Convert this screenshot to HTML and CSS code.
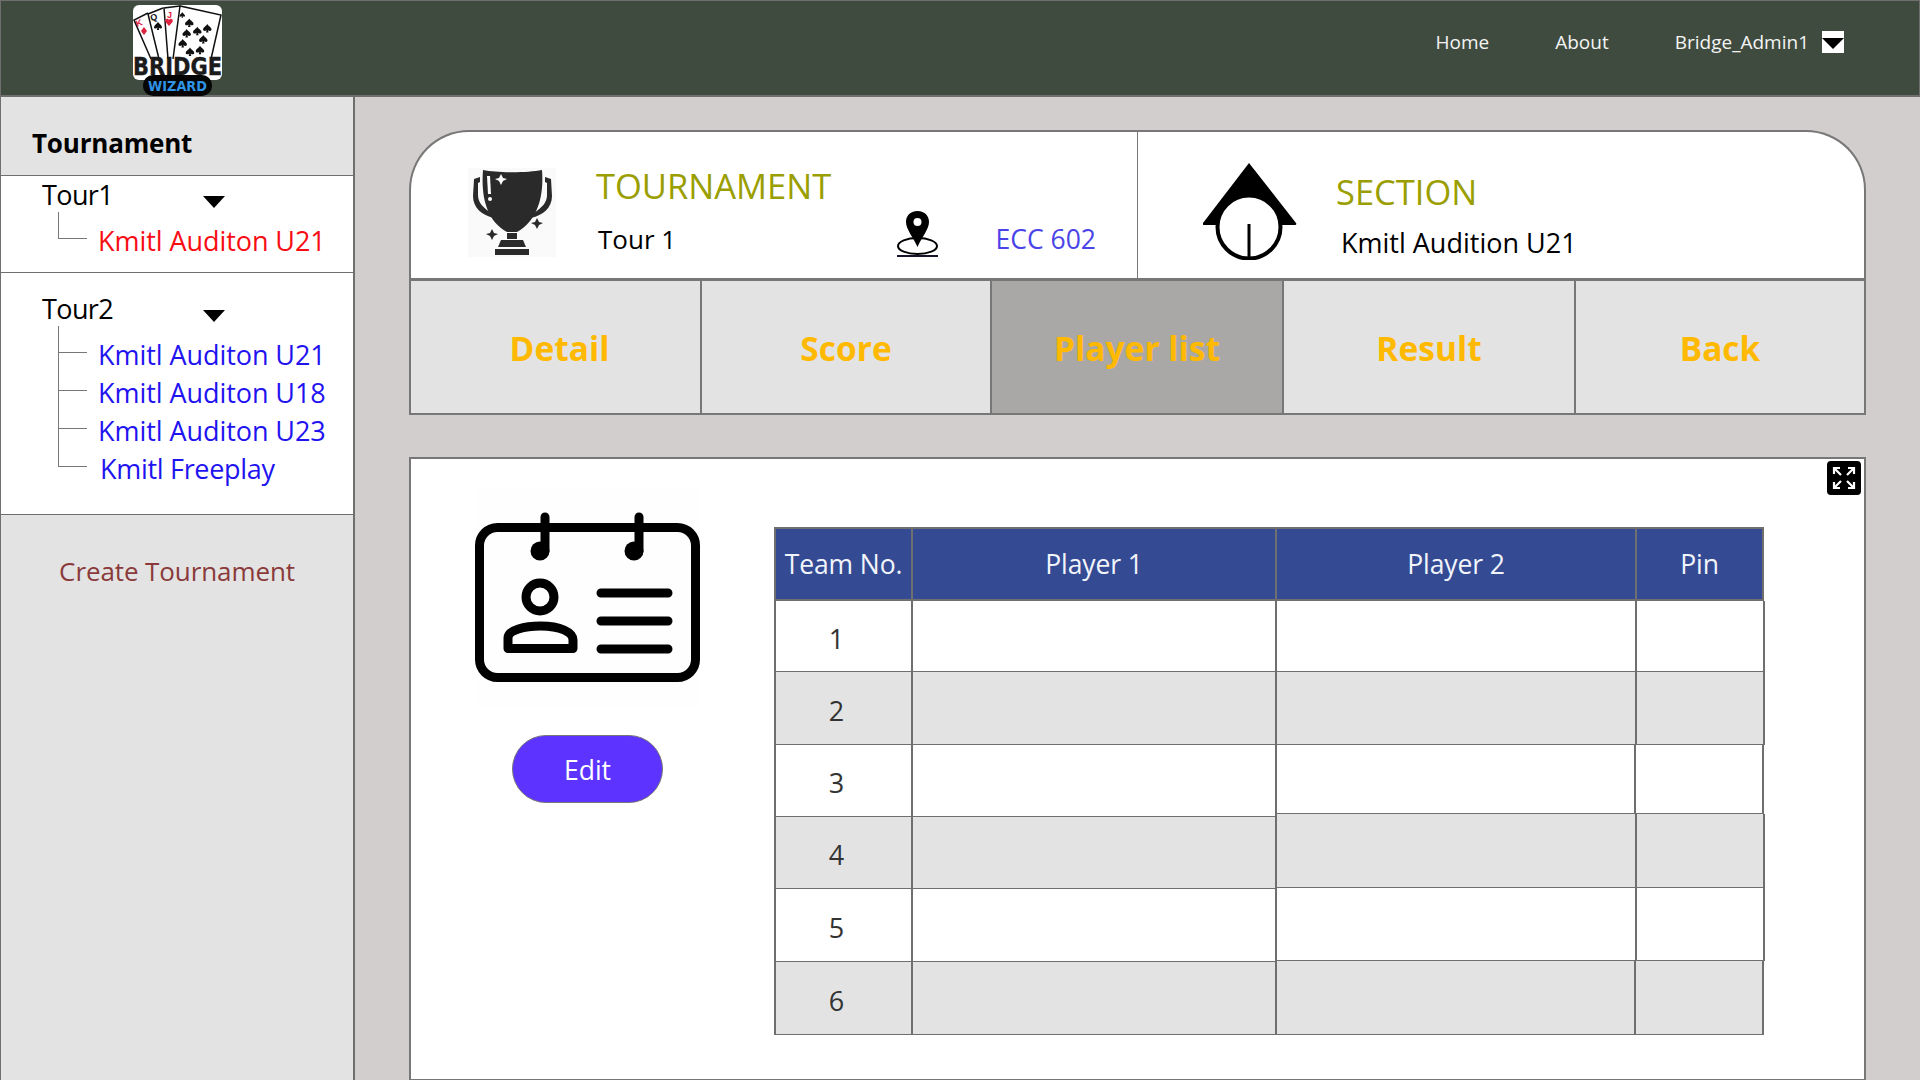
FILE: index.html
```html
<!DOCTYPE html>
<html lang="en">
<head>
<meta charset="utf-8">
<title>Bridge Wizard</title>
<link rel="stylesheet" href="styles.css">
</head>
<body>
<header class="topbar">
  <svg class="logo" viewBox="0 0 89 91" width="89" height="91">
    <defs>
      <path id="spade" d="M0 -5 C2 -2 5 -1 5 1.500 C5 3.500 2 3.500 .8 2 L1.500 5 H-1.500 L-.8 2 C-2 3.500 -5 3.500 -5 1.500 C-5 -1 -2 -2 0 -5Z"/>
    </defs>
    <rect x="0" y="0" width="89" height="75" rx="6" fill="#fff"/>
    <g fill="none" stroke="#111" stroke-width="1.500">
      <path d="M18 54 L1 15 L15 8"/>
      <path d="M26 54 L15 9 L30 3"/>
      <path d="M35 54 L31 3 L47 1"/>
      <path d="M40 54 L47 1 L88 10 L78 54"/>
    </g>
    <g class="logo-rank">
      <text x="4" y="22" fill="#e0213f" transform="rotate(-20 4 22)">K</text>
      <text x="18" y="16" fill="#111" transform="rotate(-12 18 16)">Q</text>
      <text x="34" y="13" fill="#e0213f">J</text>
    </g>
    <path fill="#e0213f" d="M11 22 L14 26 L11 30 L8 26 Z"/>
    <use href="#spade" transform="translate(25 21) scale(.8)" fill="#111"/>
    <path fill="#e0213f" d="M36 21 L32.500 17 C31 14 35 12.500 36 15 C37 12.500 41 14 39.500 17 Z"/>
    <g fill="#111">
      <use href="#spade" transform="translate(49.300 10) scale(.55)"/>
      <use href="#spade" transform="translate(56.300 17.700) scale(.85)"/>
      <use href="#spade" transform="translate(74.300 23.300) scale(.85)"/>
      <use href="#spade" transform="translate(64.300 26) scale(.85)"/>
      <use href="#spade" transform="translate(53.700 28.300) scale(.85)"/>
      <use href="#spade" transform="translate(70.300 34.300) scale(.85)"/>
      <use href="#spade" transform="translate(49.700 38.300) scale(.85)"/>
      <use href="#spade" transform="translate(57 46.700) scale(.85)"/>
      <use href="#spade" transform="translate(67 45) scale(.85)"/>
    </g>
    <text class="logo-bridge" x="0" y="70" textLength="89" lengthAdjust="spacingAndGlyphs">BRIDGE</text>
    <rect x="10" y="70" width="69" height="21" rx="10" fill="#050505"/>
    <text class="logo-wizard" x="15" y="86" textLength="59" lengthAdjust="spacingAndGlyphs">WIZARD</text>
  </svg>
  <nav class="nav">
    <a class="nav-link">Home</a>
    <a class="nav-link">About</a>
    <a class="nav-link nav-user">Bridge_Admin1</a>
    <span class="nav-drop"><i class="caret caret-sm"></i></span>
  </nav>
</header>

<div class="main">
  <aside class="sidebar">
    <h2 class="side-head">Tournament</h2>
    <section class="group group-one">
      <div class="group-title"><span class="group-name">Tour1</span><i class="caret"></i></div>
      <div class="tree">
        <div class="leaf leaf-active"><span>Kmitl Auditon U21</span></div>
      </div>
    </section>
    <section class="group group-two">
      <div class="group-title"><span class="group-name">Tour2</span><i class="caret"></i></div>
      <div class="tree">
        <div class="leaf"><span>Kmitl Auditon U21</span></div>
        <div class="leaf"><span>Kmitl Auditon U18</span></div>
        <div class="leaf"><span>Kmitl Auditon U23</span></div>
        <div class="leaf leaf-shift"><span>Kmitl Freeplay</span></div>
      </div>
    </section>
    <div class="side-create">Create Tournament</div>
  </aside>

  <main class="content">
    <div class="summary">
      <div class="sum-left">
        <svg class="ico-trophy" viewBox="0 0 88 89" width="88" height="89">
          <rect width="88" height="89" fill="#fafafa"/>
          <g fill="#2a2a2a">
            <path d="M15 2 C30 5 59 5 74 2 C76 28 70 52 49 64 L39 64 C18 52 13 28 15 2 Z"/>
            <path d="M39 65 H49 V71 H39 Z"/>
            <path d="M33 72 H55 L58 79 H30 Z"/>
            <path d="M27 81 H61 V87 H27 Z"/>
            <path d="M6 11 L12 9 V14 L10 15 V27 C10 35 15 39 24 46 L26 50 C14 47 5 40 5 28 Z"/>
            <path d="M83 11 L77 9 V14 L79 15 V27 C79 35 74 39 65 46 L63 50 C75 47 84 40 84 28 Z"/>
            <path d="M24 61 L26 65 L30 66 L26 68 L24 72 L22 68 L18 66 L22 65 Z"/>
            <path d="M69 50 L71 54 L75 55 L71 57 L69 61 L67 57 L63 55 L67 54 Z"/>
          </g>
          <path fill="#fff" d="M33 6 L35 10 L39 11 L35 13 L33 17 L31 13 L27 11 L31 10 Z"/>
          <path fill="#fff" d="M19 8 L22 8 L23 26 L20 26 Z"/>
          <circle cx="22" cy="31" r="2" fill="#fff"/>
        </svg>
        <div class="sum-text">
          <div class="sum-title">TOURNAMENT</div>
          <div class="sum-row">
            <span class="sum-name">Tour 1</span>
            <svg class="ico-pin" viewBox="0 0 42 46" width="42" height="46">
              <ellipse cx="20.500" cy="35" rx="19.500" ry="8" fill="none" stroke="#000" stroke-width="2"/>
              <path fill="#000" d="M20.500 0 C28 0 32 5 32 11 C32 18 25 26 20.500 36 C16 26 9 18 9 11 C9 5 13 0 20.500 0 Z"/>
              <circle cx="20.500" cy="11" r="4" fill="#fff"/>
              <rect x="0" y="44" width="41" height="2" fill="#15152a"/>
            </svg>
            <span class="sum-room">ECC 602</span>
          </div>
        </div>
      </div>
      <div class="sum-right">
        <svg class="ico-section" viewBox="0 0 94 97" width="94" height="97">
          <path fill="#000" d="M46 0 L93 60 Q94 62 92 62 H1 Q-1 62 0 60 Z"/>
          <circle cx="46" cy="64" r="31.500" fill="#fff" stroke="#000" stroke-width="4"/>
          <path d="M46 61 V95" stroke="#000" stroke-width="3" fill="none"/>
        </svg>
        <div class="sec-text">
          <div class="sum-title">SECTION</div>
          <div class="sec-name">Kmitl Audition U21</div>
        </div>
      </div>
    </div>

    <div class="tabs">
      <div class="tab tab-a">Detail</div>
      <div class="tab tab-b">Score</div>
      <div class="tab tab-c tab-on">Player list</div>
      <div class="tab tab-d">Result</div>
      <div class="tab tab-e">Back</div>
    </div>

    <div class="panel">
      <svg class="ico-expand" viewBox="0 0 34 34" width="34" height="34">
        <rect width="34" height="34" rx="4" fill="#000"/>
        <g fill="none" stroke="#fff" stroke-width="2.200">
          <path d="M7 13 V7 H13 M7 7 L14 14"/>
          <path d="M27 13 V7 H21 M27 7 L20 14"/>
          <path d="M7 21 V27 H13 M7 27 L14 20"/>
          <path d="M27 21 V27 H21 M27 27 L20 20"/>
        </g>
      </svg>
      <div class="side-col">
        <svg class="ico-id" viewBox="0 0 225 220" width="225" height="220">
          <rect x="3" width="220" height="220" fill="#fefefe"/>
          <g fill="none" stroke="#000" stroke-width="9" stroke-linecap="round" stroke-linejoin="round">
            <rect x="4.500" y="39.500" width="216" height="150" rx="18"/>
            <path d="M70 29 V63"/>
            <path d="M164 29 V63"/>
            <circle cx="65" cy="109" r="14"/>
            <path d="M33 160.500 V150 C33 142 50 138 65.500 138 C85 138 98 144 98 152 V160.500 Z"/>
            <path d="M126 105 H193 M126 133 H193 M126 161 H193"/>
          </g>
          <circle cx="65" cy="63" r="9.500" fill="#000"/>
          <circle cx="159" cy="63" r="9.500" fill="#000"/>
        </svg>
        <button class="edit">Edit</button>
      </div>
      <div class="tbl">
        <div class="thead">
          <div class="th th-team">Team No.</div>
          <div class="th th-p1">Player 1</div>
          <div class="th th-p2">Player 2</div>
          <div class="th th-pin">Pin</div>
        </div>
        <div class="tbody">
          <div class="stack">
            <div class="lrow"><div class="td td-team">1</div><div class="td td-p1"></div></div>
            <div class="lrow"><div class="td td-team">2</div><div class="td td-p1"></div></div>
            <div class="lrow"><div class="td td-team">3</div><div class="td td-p1"></div></div>
            <div class="lrow"><div class="td td-team">4</div><div class="td td-p1"></div></div>
            <div class="lrow"><div class="td td-team">5</div><div class="td td-p1"></div></div>
            <div class="lrow"><div class="td td-team">6</div><div class="td td-p1"></div></div>
          </div>
          <div class="stack">
            <div class="rrow"><div class="td td-p2"></div><div class="td td-pin"></div></div>
            <div class="rrow"><div class="td td-p2"></div><div class="td td-pin"></div></div>
            <div class="rrow"><div class="td td-p2"></div><div class="td td-pin"></div></div>
            <div class="rrow"><div class="td td-p2"></div><div class="td td-pin"></div></div>
            <div class="rrow"><div class="td td-p2"></div><div class="td td-pin"></div></div>
            <div class="rrow"><div class="td td-p2"></div><div class="td td-pin"></div></div>
          </div>
        </div>
      </div>
    </div>
  </main>
</div>
</body>
</html>
```
FILE: styles.css
```css
* { box-sizing: border-box; }
html, body { margin: 0; height: 100%; }
body {
  width: 1920px;
  height: 1080px;
  overflow: hidden;
  background: #d3cece;
  font-family: "Open Sans", "Noto Sans", sans-serif;
  display: flex;
  flex-direction: column;
}

/* top bar */
.topbar {
  height: 97px;
  flex: none;
  background: #3f4b3f;
  border: 1px solid #6f6f6f;
  border-bottom-width: 2px;
  display: flex;
  align-items: flex-start;
  padding: 4px 75px 0 132px;
}
.logo { display: block; flex: none; overflow: visible; }
.logo-rank text { font: bold 9px "Liberation Sans", sans-serif; }
.logo-bridge { font: bold 24px "DejaVu Sans", sans-serif; fill: #1b1b1b; stroke: #1b1b1b; stroke-width: .4px; }
.logo-wizard { font: bold 14px "DejaVu Sans", sans-serif; fill: #2f93e6; }
.nav {
  margin-left: auto;
  height: 74px;
  display: flex;
  align-items: center;
  color: #f4f4f4;
  font-size: 19px;
}
.nav-link { margin-right: 66px; }
.nav-user { margin-right: 13px; }
.nav-drop {
  width: 22px;
  height: 22px;
  background: #fff;
  display: flex;
  align-items: center;
  justify-content: center;
}
.caret {
  display: block;
  width: 0;
  height: 0;
  border-left: 11px solid transparent;
  border-right: 11px solid transparent;
  border-top: 11px solid #000;
}
.caret-sm { margin-top: 2px; }

/* layout */
.main { flex: 1; display: flex; min-height: 0; }
.sidebar {
  width: 355px;
  flex: none;
  background: #e3e3e3;
  border-left: 1px solid #6f6f6f;
  border-right: 2px solid #6f6f6f;
}
.side-head {
  margin: 0;
  height: 79px;
  padding: 22px 0 0 31px;
  font-size: 26px;
  letter-spacing: -.2px;
  line-height: 48px;
  font-weight: 700;
  color: #000;
  border-bottom: 1px solid #6f6f6f;
}
.group {
  background: #fff;
  border-bottom: 1px solid #6f6f6f;
}
.group-one { padding-bottom: 15px; }
.group-two { padding: 17px 0 29px; }
.group-title { display: flex; height: 36px; font-size: 27px; line-height: 36px; color: #000; }
.group-name { width: 202px; padding: 1px 0 0 41px; letter-spacing: -.6px; }
.group-title .caret { margin-top: 20px; border-width: 12px 11px 0; border-style: solid; border-color: #000 transparent transparent; }
.tree { margin-left: 57px; }
.tree::before { content: ""; display: block; height: 7px; border-left: 1px solid #777; }
.leaf {
  height: 38px;
  display: flex;
  align-items: center;
  font-size: 27px;
  letter-spacing: -.06px;
  color: #1f14f0;
  background: linear-gradient(#777, #777) left top / 1px 100% no-repeat;
}
.leaf:last-child { background-size: 1px 50%; }
.leaf::before {
  content: "";
  flex: none;
  width: 29px;
  height: 1px;
  background: #777;
  margin-right: 11px;
}
.leaf span { padding-top: 5px; white-space: nowrap; }
.leaf-active { color: #f80d15; }
.leaf-shift span { margin-left: 2px; letter-spacing: -.3px; }
.side-create {
  padding-top: 38px;
  text-align: center;
  font-size: 26px;
  letter-spacing: -.1px;
  line-height: 36px;
  color: #8a3a3a;
}

.content { flex: 1; padding: 33px 54px 0 54px; display: flex; flex-direction: column; min-width: 0; }

/* summary */
.summary {
  height: 148px;
  flex: none;
  display: flex;
  background: #fff;
  border: 2px solid #777;
  border-bottom: 0;
  border-radius: 60px 60px 0 0;
}
.sum-left { width: 727px; display: flex; padding: 36px 0 0 57px; border-right: 1px solid #777; }
.ico-trophy, .ico-pin, .ico-section { display: block; flex: none; }
.sum-text { margin: -2px 0 0 40px; width: 500px; }
.sum-title { font-size: 34.500px; line-height: 40px; color: #9a9e00; }
.sum-row { display: flex; align-items: flex-end; height: 46px; margin-top: 5px; }
.sum-name { width: 302px; padding-left: 2px; font-size: 26px; line-height: 36px; color: #000; }
.sum-room { margin-left: 57px; padding-top: 1px; font-size: 26.500px; line-height: 36px; color: #4a44e8; white-space: nowrap; }
.sum-right { flex: 1; display: flex; padding: 31px 0 0 65px; }
.sec-text { margin: 9px 0 0 39px; }
.sec-name { margin: 13px 0 0 5px; font-size: 27px; line-height: 36px; color: #000; white-space: nowrap; }

/* tabs */
.tabs {
  height: 137px;
  flex: none;
  display: flex;
  border: 2px solid #777;
  border-top-width: 3px;
  background: #e3e3e3;
}
.tab {
  display: flex;
  align-items: center;
  justify-content: center;
  padding-top: 2px;
  font-size: 33.500px;
  font-weight: 700;
  color: #ffb900;
  border-right: 2px solid #777;
}
.tab-a { width: 291px; padding-left: 8px; }
.tab-b { width: 290px; }
.tab-c { width: 292px; }
.tab-d { width: 292px; }
.tab-e { flex: 1; border-right: 0; }
.tab-on { background: #a9a8a6; }

/* panel */
.panel {
  position: relative;
  margin-top: 42px;
  flex: 1;
  display: flex;
  align-items: flex-start;
  background: #fff;
  border: 2px solid #777;
  border-bottom-width: 1px;
  padding-left: 64px;
}
.ico-expand { position: absolute; top: 2px; right: 3px; display: block; }
.side-col { width: 225px; flex: none; padding-top: 29px; display: flex; flex-direction: column; align-items: center; }
.ico-id { display: block; }
.edit {
  margin-top: 27px;
  width: 151px;
  height: 68px;
  border: 1px solid #777;
  border-radius: 34px;
  background: #5c33ff;
  color: #fff;
  font: 26.500px/1 "Open Sans", sans-serif;
  padding: 2px 0 0;
}

/* table */
.tbl { margin: 68px 0 0 74px; width: 990px; color: #333; }
.thead { display: flex; height: 74px; background: #344b94; border: 2px solid #6f6f6f; }
.th {
  display: flex;
  align-items: center;
  justify-content: center;
  color: #f2f4fb;
  font-size: 26.500px;
  letter-spacing: -.1px;
  border-right: 2px solid #6f6f6f;
}
.th-team { width: 137px; white-space: nowrap; }
.th-p1 { width: 364px; }
.th-p2 { width: 360px; }
.th-pin { flex: 1; border-right: 0; }
.tbody { display: flex; }
.stack { flex: none; }
.lrow, .rrow { display: flex; }
.lrow:nth-child(1), .rrow:nth-child(1) { height: 71px; }
.lrow:nth-child(2), .rrow:nth-child(2) { height: 73px; }
.lrow:nth-child(3) { height: 72px; }
.lrow:nth-child(4) { height: 72px; }
.lrow:nth-child(5) { height: 73px; }
.lrow:nth-child(6) { height: 73px; }
.rrow:nth-child(3) { height: 69px; }
.rrow:nth-child(4) { height: 74px; }
.rrow:nth-child(5) { height: 73px; }
.rrow:nth-child(6) { height: 74px; }
.lrow:nth-child(even) .td, .rrow:nth-child(even) .td { background: #e3e3e3; }
.td { height: 100%; background: #fff; border-right: 2px solid #6f6f6f; border-bottom: 1px solid #6f6f6f; }
.td-team {
  width: 139px;
  border-left: 2px solid #6f6f6f;
  display: flex;
  align-items: center;
  justify-content: center;
  padding: 4px 14px 0 0;
  font-size: 27px;
}
.td-p1 { width: 364px; }
.td-p2 { width: 360px; }
.td-pin { width: 128px; }
.rrow:nth-child(3) .td-p2, .rrow:nth-child(6) .td-p2 { width: 359px; }
```
